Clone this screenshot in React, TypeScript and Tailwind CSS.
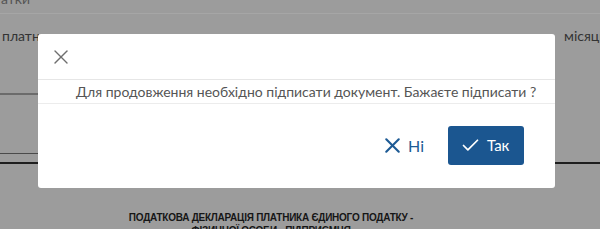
import { X, Check } from "lucide-react";

function ConfirmDialog() {
  return (
    <div className="absolute left-[38px] top-[34px] w-[517px] rounded-[3px] bg-white">
      <div className="h-[46px] border-b border-[#e6e6e6] pl-[11px] pt-[11px]">
        <X className="h-[24px] w-[24px] text-[#6e6e6e]" strokeWidth={1.4} />
      </div>
      <div className="h-[24px] border-b border-[#ececec] pl-[38px] pt-[2px] text-[14px] leading-[19px] text-[#555]">
        Для продовження необхідно підписати документ. Бажаєте підписати ?
      </div>
      <div className="flex items-center justify-end gap-[24px] pb-[23px] pr-[31px] pt-[22px]">
        <button className="flex items-center gap-[3px] text-[16px] text-[#1d5a94]">
          <X className="h-[25px] w-[25px]" strokeWidth={2} />
          <span>Ні</span>
        </button>
        <button className="flex h-[39px] w-[76px] items-center gap-[6px] rounded-[3px] bg-[#1b5690] pl-[12px] text-[15px] text-white">
          <Check className="h-[21px] w-[21px]" strokeWidth={2} />
          <span>Так</span>
        </button>
      </div>
    </div>
  );
}

export default function App() {
  return (
    <div
      className="relative h-[229px] w-[600px] overflow-hidden bg-[#9c9c9c]"
      style={{ fontFamily: "Lato, 'Noto Sans', sans-serif" }}
    >
      <div className="-mt-[9px] h-[23px] border-b border-[#a6a6a6] pl-[1px] text-[14px] leading-[16px] text-[#555]">
        атки
      </div>
      <div className="flex justify-between pt-[14px] text-[14px] leading-[16px] text-[#333]">
        <span className="pl-[2px]">платника єдиного податку</span>
        <span className="-mr-[6px]">місяць</span>
      </div>
      <div className="mt-[49px] h-[2px] w-[40px] bg-[#6b6b6b]" />
      <div className="mt-[58px] h-[1px] w-[40px] bg-[#4a4a4a]" />
      <div className="mt-[8px] h-[2px] bg-[#1e1e1e]" />
      <div
        className="ml-[86px] mt-[47px] w-[370px] text-center text-[10px] font-bold leading-[13px] tracking-[-0.25px] text-[#161616]"
        style={{ fontFamily: "'Liberation Sans Narrow', 'Arial Narrow', sans-serif" }}
      >
        ПОДАТКОВА ДЕКЛАРАЦІЯ ПЛАТНИКА ЄДИНОГО ПОДАТКУ -
        <br />
        ФІЗИЧНОЇ ОСОБИ - ПІДПРИЄМЦЯ
      </div>
      <ConfirmDialog />
    </div>
  );
}
